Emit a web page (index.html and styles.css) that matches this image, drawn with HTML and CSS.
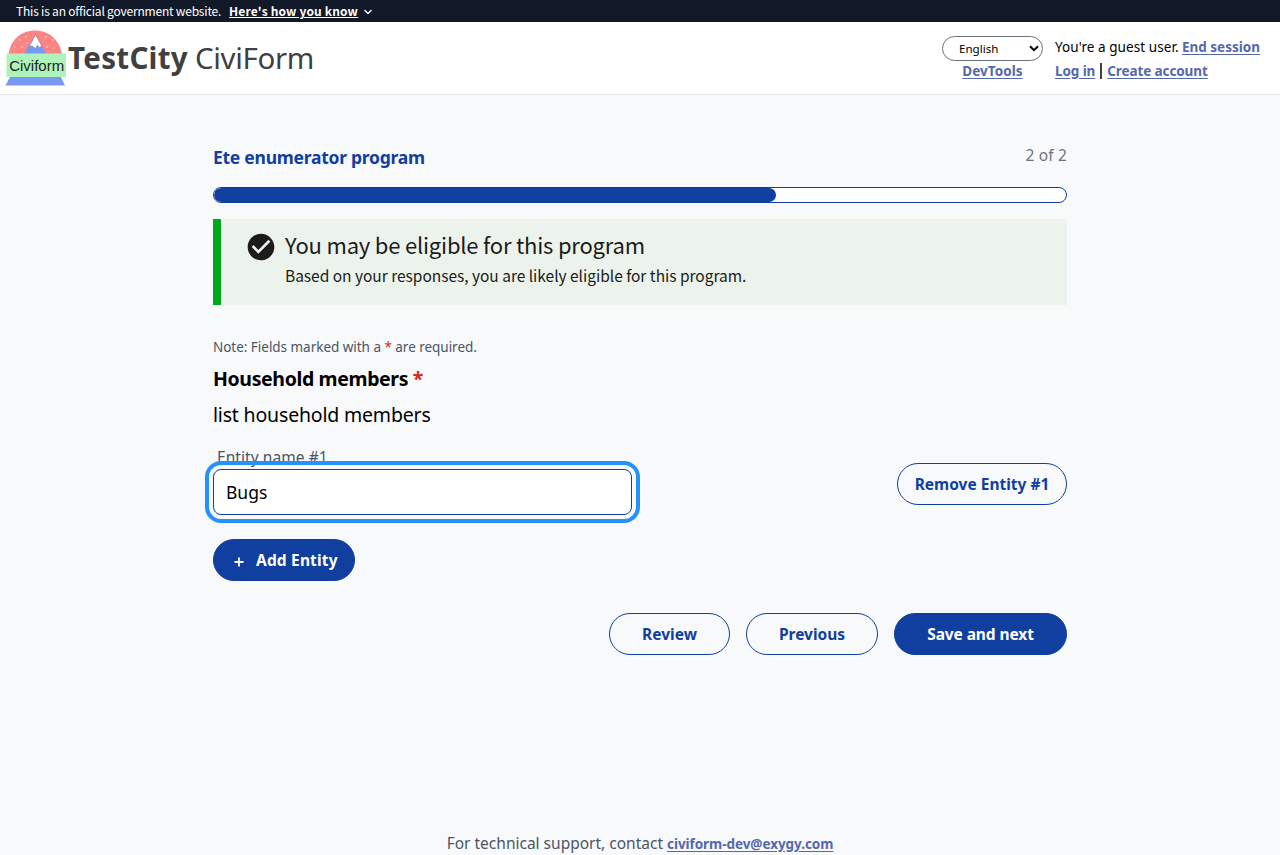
FILE: index.html
```html
<!DOCTYPE html>
<html lang="en">
<head>
<meta charset="utf-8">
<title>Household members</title>
<link rel="stylesheet" href="styles.css">
</head>
<body>
<div class="gov-banner">
  <span class="gov-text">This is an official government website.</span>
  <a class="gov-link" href="#">Here's how you know</a>
  <svg class="gov-chevron" viewBox="0 0 8 6" width="8" height="6"><path d="M.5 1L4 4.500 7.500 1" fill="none" stroke="#fff" stroke-width="1.3"/></svg>
</div>
<header class="header">
  <div class="brand">
    <svg class="logo" width="62" height="58" viewBox="0 0 62 58">
      <path d="M3.500 26C5 11 16 1.500 30 1.500S55 11 57 26z" fill="#fb8484"/>
      <path d="M19 25L30.500 5.500 41.500 25z" fill="#7899f2"/>
      <path d="M24.500 17L30.500 6l6.200 11-2.700 1.500-1.500-2.500-2.200 3.500-2.800-2.500z" fill="#fff" stroke="#777" stroke-width=".4"/>
      <g fill="#ffd9d9"><circle cx="21" cy="8" r=".8"/><circle cx="15" cy="11" r=".8"/><circle cx="22" cy="14" r=".8"/><circle cx="10" cy="18" r=".8"/><circle cx="17" cy="18" r=".8"/><circle cx="41" cy="8" r=".8"/><circle cx="48" cy="11" r=".8"/><circle cx="42" cy="18" r=".8"/><circle cx="49" cy="19" r=".8"/></g>
      <path d="M6 46h49l5 10.500H.5z" fill="#7899f2"/>
      <rect x="1.500" y="24.500" width="59.500" height="23.500" fill="#aef4ba"/>
      <text class="logo-text" x="4.200" y="42" textLength="55" lengthAdjust="spacingAndGlyphs">Civiform</text>
    </svg>
    <div class="brand-name"><span class="brand-bold">TestCity</span><span class="brand-light">CiviForm</span></div>
  </div>
  <div class="tools">
    <div class="language">
      <button class="select"><span>English</span><svg width="10" height="7" viewBox="0 0 10 7"><path d="M1 1.200l4 4 4-4" fill="none" stroke="#000" stroke-width="2"/></svg></button>
      <a class="link dev" href="#">DevTools</a>
    </div>
    <div class="account">
      <div class="row"><span class="guest">You're a guest user.</span><a class="link end" href="#">End session</a></div>
      <div class="row"><a class="link login" href="#">Log in</a><span class="bar"></span><a class="link create" href="#">Create account</a></div>
    </div>
  </div>
</header>
<main class="main">
  <div class="progress-head"><h1 class="program">Ete enumerator program</h1><span class="count">2 of 2</span></div>
  <div class="progress"><div class="progress-fill"></div></div>
  <section class="alert">
    <svg width="32" height="32" viewBox="0 0 24 24"><path fill="#1b1b1b" d="M12 2C6.480 2 2 6.480 2 12s4.480 10 10 10 10-4.480 10-10S17.520 2 12 2zm-2 15l-5-5 1.410-1.410L10 14.170l7.590-7.590L19 8l-9 9z"/></svg>
    <div class="alert-body"><h2 class="alert-title">You may be eligible for this program</h2><p class="alert-text">Based on your responses, you are likely eligible for this program.</p></div>
  </section>
  <p class="note">Note: Fields marked with a <span class="star">*</span> are required.</p>
  <h2 class="question">Household members <span class="star">*</span></h2>
  <p class="help">list household members</p>
  <div class="entity">
    <div class="field"><label class="label" for="name">Entity name #1</label><input class="input" id="name" value="Bugs"></div>
    <button class="btn remove">Remove Entity #1</button>
  </div>
  <button class="btn solid add"><svg width="10" height="10" viewBox="0 0 10 10"><path d="M5 .5v9M.5 5h9" stroke="#fff" stroke-width="1.800"/></svg><span>Add Entity</span></button>
  <div class="actions"><button class="btn review">Review</button><button class="btn previous">Previous</button><button class="btn solid save">Save and next</button></div>
</main>
<footer class="footer"><span class="support">For technical support, contact</span><a class="link mail" href="#">civiform-dev@exygy.com</a></footer>
</body>
</html>
```
FILE: styles.css
```css
* { box-sizing: border-box; }
body { margin: 0; height: 855px; overflow: hidden; display: flex; flex-direction: column; background: #f8f9fb; color: #000; font: 15.5px/24px "Noto Sans", sans-serif; }
h1, h2, p { margin: 0; font-weight: 400; }
button { font: inherit; cursor: pointer; color: inherit; }
.gov-banner { flex: none; height: 22px; padding: 0 16px; display: flex; align-items: center; background: #111827; color: #fff; font: 12px/22px "Noto Sans CJK JP", sans-serif; white-space: nowrap; }
.gov-text { letter-spacing: -0.2px; }
.gov-link { margin-left: 8px; color: #fff; font-weight: 700; letter-spacing: 0.16px; }
.gov-chevron { margin: 2px 0 0 6px; }
.header { flex: none; height: 73px; display: flex; justify-content: space-between; border-bottom: 1px solid #e5e7eb; background: #fff; }
.brand { display: flex; align-items: center; padding-left: 5px; }
.logo { margin-right: 1px; }
.logo-text { font: 14px "Liberation Sans", sans-serif; fill: #222; }
.brand-name { display: flex; gap: 7px; color: #404040; font-size: 29.5px; line-height: 36px; }
.brand-bold { font-weight: 700; letter-spacing: 0.3px; }
.brand-light { font-weight: 400; letter-spacing: -0.35px; }
.tools { display: flex; gap: 12px; padding: 13px 20px 0 0; font-size: 13.5px; white-space: nowrap; }
.language { width: 101px; display: flex; flex-direction: column; align-items: center; }
.select { width: 101px; height: 25px; margin-top: 1px; padding: 0 3px 0 16px; display: flex; align-items: center; justify-content: space-between; border: 1px solid #6b7280; border-radius: 13px; background: #fff; font-size: 11.6px; line-height: 20px; }
.link { color: #5468ac; font-weight: 700; letter-spacing: -0.1px; text-underline-offset: 2px; }
.language .dev { margin-top: -2px; letter-spacing: 0.05px; }
.account { width: 205px; }
.row { display: flex; height: 24px; align-items: center; }
.guest { letter-spacing: 0.07px; }
.row .end { margin-left: auto; letter-spacing: 0; }
.bar { width: 2px; height: 16px; margin: 0 5px; background: #404040; }
.main { width: 854px; margin: 0 auto; padding-top: 46px; flex: 1; display: flex; flex-direction: column; }
.progress-head { display: flex; justify-content: space-between; height: 46px; }
.program { padding-top: 4px; color: #113f9f; font-size: 17.5px; font-weight: 700; letter-spacing: -0.26px; }
.count { padding-top: 2px; color: #6b7280; letter-spacing: 0.15px; }
.progress { height: 16px; border: 1px solid #113f9f; border-radius: 8px; background: #fff; overflow: hidden; }
.progress-fill { width: 562px; height: 14px; border-radius: 7px; background: #113f9f; }
.alert { height: 86px; margin-top: 16px; padding: 12px 24px 0; display: flex; gap: 8px; border-left: 8px solid #00a91c; background: #ecf3ec; color: #1b1b1b; font-family: "Noto Sans CJK JP", sans-serif; }
.alert-title { font-size: 22px; line-height: 26px; letter-spacing: -0.2px; }
.alert-text { margin-top: 6px; font-size: 15.5px; letter-spacing: -0.02px; }
.note { margin-top: 30px; color: #4b5563; font-size: 13.5px; letter-spacing: -0.03px; }
.star { color: #dc2626; }
.question { margin-top: 6px; font-size: 19.5px; line-height: 28px; font-weight: 700; letter-spacing: -0.37px; }
.help { margin-top: 8px; font-size: 19.5px; line-height: 28px; letter-spacing: -0.18px; }
.entity { display: flex; justify-content: space-between; align-items: flex-start; margin-top: 16px; }
.label { display: block; height: 24px; padding-left: 4px; color: #4b5563; letter-spacing: 0.07px; }
.input { display: block; width: 419px; height: 46px; padding: 0 12px 1px; border: 1px solid #113f9f; border-radius: 8px; outline: 4px solid #2491ff; outline-offset: 4px; background: #fff; color: #000; font: 17.5px/24px "Noto Sans", sans-serif; }
.btn { height: 42px; padding: 0; border: 1px solid #113f9f; border-radius: 21px; background: transparent; color: #113f9f; font-weight: 700; line-height: 40px; white-space: nowrap; }
.solid { background: #113f9f; color: #fff; }
.remove { width: 170px; margin-top: 18px; }
.add { width: 142px; margin-top: 24px; display: flex; align-items: center; padding-left: 20px; gap: 12px; letter-spacing: 0.17px; }
.add svg { margin-top: 3px; }
.actions { display: flex; justify-content: flex-end; gap: 16px; margin-top: 32px; }
.review { width: 121px; }
.previous { width: 132px; }
.save { width: 173px; letter-spacing: -0.1px; }
.footer { flex: none; height: 24px; display: flex; justify-content: center; gap: 4px; color: #4b5563; white-space: nowrap; }
.mail { padding-top: 1px; font-size: 13.5px; letter-spacing: -0.05px; }
```
